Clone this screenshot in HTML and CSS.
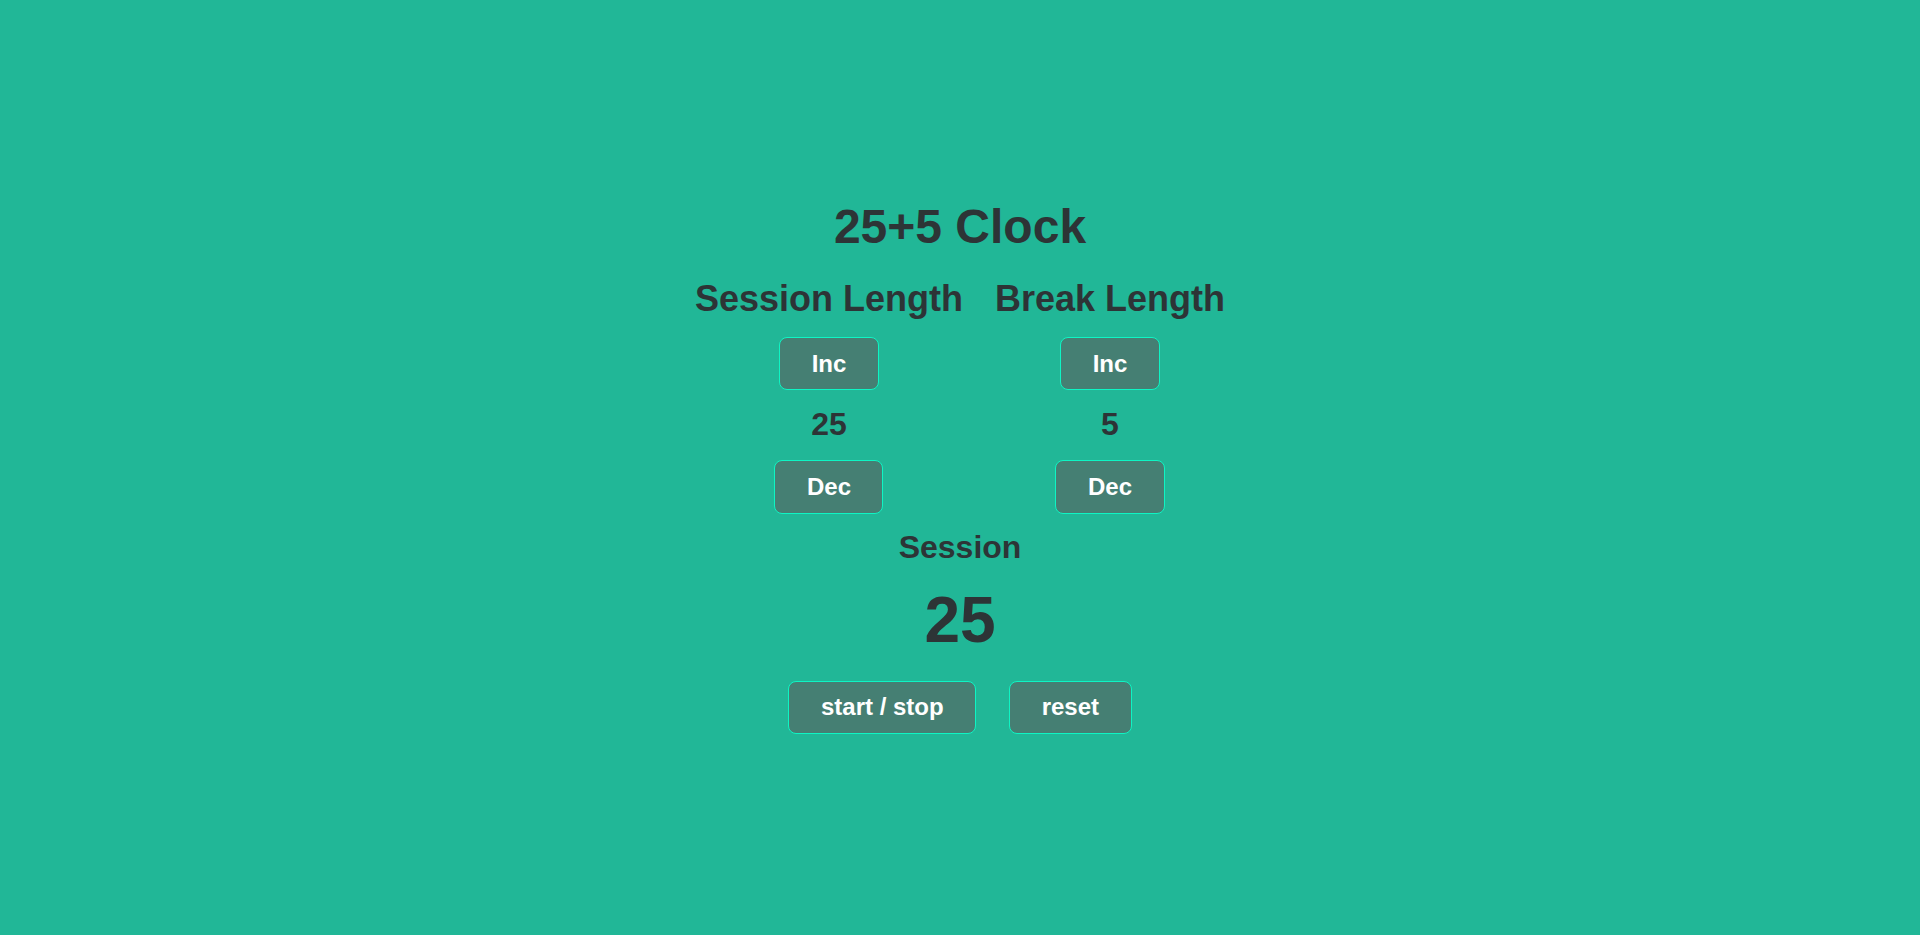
FILE: index.html
```html
<!DOCTYPE html>
<html lang="en">
<head>
<meta charset="utf-8">
<title>25+5 Clock</title>
<link rel="stylesheet" href="styles.css">
</head>
<body>
<main class="clock">
  <h1 class="title">25+5 Clock</h1>
  <div class="settings">
    <section class="setting">
      <h2 class="setting-label">Session Length</h2>
      <button class="btn">Inc</button>
      <div class="setting-value">25</div>
      <button class="btn">Dec</button>
    </section>
    <section class="setting">
      <h2 class="setting-label">Break Length</h2>
      <button class="btn">Inc</button>
      <div class="setting-value">5</div>
      <button class="btn">Dec</button>
    </section>
  </div>
  <div class="timer-label">Session</div>
  <div class="timer-left">25</div>
  <div class="controls">
    <button class="btn">start / stop</button>
    <button class="btn">reset</button>
  </div>
</main>
</body>
</html>
```

FILE: styles.css
```css
html, body {
  margin: 0;
  padding: 0;
}

body {
  background: #21b797;
  color: #2d3436;
  font-family: "Liberation Sans", Arial, sans-serif;
  font-weight: bold;
}

.clock {
  min-height: 100vh;
  box-sizing: border-box;
  padding-bottom: 2px;
  display: flex;
  flex-direction: column;
  align-items: center;
  justify-content: center;
}

.title {
  margin: 0;
  font-size: 48px;
  line-height: normal;
}

.settings {
  display: flex;
  gap: 32px;
  margin-top: 24px;
}

.setting {
  display: flex;
  flex-direction: column;
  align-items: center;
}

.setting-label {
  margin: 0 0 17px;
  font-size: 36px;
  line-height: normal;
}

.setting-value {
  font-size: 32px;
  line-height: normal;
  margin: 16px 0 17px;
}

.timer-label {
  margin-top: 15px;
  font-size: 32px;
  line-height: normal;
}

.timer-left {
  margin-top: 17px;
  font-size: 64px;
  line-height: normal;
}

.controls {
  display: flex;
  gap: 33px;
  margin-top: 24px;
}

.btn {
  font-family: "Liberation Sans", Arial, sans-serif;
  font-weight: bold;
  font-size: 24px;
  line-height: normal;
  color: #ffffff;
  background: #457f73;
  border: 1px solid #0ef5c4;
  border-radius: 8px;
  padding: 11.7px 31.5px;
  margin: 0;
  cursor: pointer;
}
```
